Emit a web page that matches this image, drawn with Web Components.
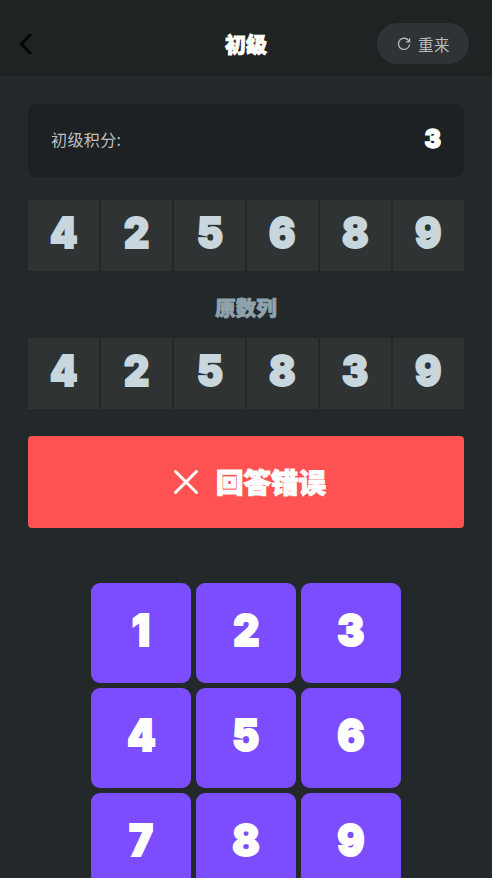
<!DOCTYPE html>
<html lang="zh">
<head>
<meta charset="utf-8">
<title>初级</title>
<style>
    html, body {
        margin: 0;
        height: 100%;
        overflow: hidden;
        background: #23282a;
        font-family: "Noto Sans CJK SC", "Liberation Sans", sans-serif;
    }
</style>
</head>
<body>
<game-header title-text="初级"></game-header>
<game-screen>
    <score-card label="初级积分:" score="3"></score-card>
    <digit-row digits="425689"></digit-row>
    <section-label>原数列</section-label>
    <digit-row digits="425839"></digit-row>
    <result-banner>回答错误</result-banner>
    <key-pad></key-pad>
</game-screen>
<script>
class GameHeader extends HTMLElement {
    constructor() {
        super()
        this.attachShadow({ mode: 'open' })
    }
    connectedCallback() {
        this.shadowRoot.innerHTML = `
            <style>
                :host {
                    display: grid;
                    grid-template-columns: 1fr auto 1fr;
                    align-items: center;
                    height: 76px;
                    box-sizing: border-box;
                    padding: 11px 23px 0 18px;
                    background: #1f2324;
                }
                svg { display: block; }
                h1 {
                    margin: 0 0 2px 5px;
                    font-size: 21px;
                    line-height: 28px;
                    font-weight: 900;
                    color: #fff;
                    -webkit-text-stroke: 0.9px #fff;
                }
                button {
                    justify-self: end;
                    display: flex;
                    align-items: center;
                    gap: 7px;
                    width: 92px;
                    height: 41px;
                    padding: 0 0 0 20px;
                    border: 0;
                    border-radius: 21px;
                    background: #2f3335;
                    color: #b9bdbd;
                    font: 400 15.5px "Noto Sans CJK SC", sans-serif;
                    letter-spacing: 0.5px;
                }
            </style>
            <svg width="16" height="24" viewBox="0 0 16 24">
                <path d="M13 2 L3.5 12 L13 22" fill="none" stroke="#050607" stroke-width="3"/>
            </svg>
            <h1>${this.getAttribute('title-text')}</h1>
            <button>
                <svg width="14" height="14" viewBox="0 0 14 14">
                    <path d="M12 4.2 A5.6 5.6 0 1 0 12.6 7.5" fill="none" stroke="#b9bdbd" stroke-width="1.3"/>
                    <path d="M12.6 1.2 V4.8 H9" fill="none" stroke="#b9bdbd" stroke-width="1.2"/>
                </svg>
                重来
            </button>
        `
    }
}
customElements.define('game-header', GameHeader)

class GameScreen extends HTMLElement {
    constructor() {
        super()
        this.attachShadow({ mode: 'open' }).innerHTML = `
            <style>
                :host {
                    display: block;
                    padding: 28px 28px 0;
                }
            </style>
            <slot></slot>
        `
    }
}
customElements.define('game-screen', GameScreen)

class ScoreCard extends HTMLElement {
    constructor() {
        super()
        this.attachShadow({ mode: 'open' })
    }
    connectedCallback() {
        this.shadowRoot.innerHTML = `
            <style>
                :host {
                    display: flex;
                    justify-content: space-between;
                    align-items: center;
                    height: 73px;
                    box-sizing: border-box;
                    padding: 0 23px 4px;
                    margin-bottom: 23px;
                    border-radius: 8px;
                    background: #1e2123;
                }
                span {
                    font-size: 16px;
                    letter-spacing: 0.4px;
                    color: #bcbfbf;
                }
                b {
                    display: inline-block;
                    transform: scaleX(.95);
                    font: 900 26px/1 Inter, "DejaVu Sans", sans-serif;
                    color: #fff;
                    -webkit-text-stroke: 1.4px #fff;
                }
            </style>
            <span>${this.getAttribute('label')}</span>
            <b>${this.getAttribute('score')}</b>
        `
    }
}
customElements.define('score-card', ScoreCard)

class DigitRow extends HTMLElement {
    constructor() {
        super()
        this.attachShadow({ mode: 'open' })
    }
    connectedCallback() {
        let cells = this.getAttribute('digits').split('').map(d => `<div><span>${d}</span></div>`).join('')
        this.shadowRoot.innerHTML = `
            <style>
                :host {
                    display: grid;
                    grid-template-columns: repeat(6, 71px);
                    gap: 2px;
                }
                div {
                    display: flex;
                    justify-content: center;
                    align-items: center;
                    height: 71px;
                    padding-bottom: 5px;
                    box-sizing: border-box;
                    background: #2f3334;
                    font: 900 42px/1 Inter, "DejaVu Sans", sans-serif;
                    color: #c8d6de;
                    -webkit-text-stroke: 2px #c8d6de;
                }
                span {
                    display: inline-block;
                    transform: scaleX(.93);
                }
            </style>
            ${cells}
        `
    }
}
customElements.define('digit-row', DigitRow)

class SectionLabel extends HTMLElement {
    constructor() {
        super()
        this.attachShadow({ mode: 'open' }).innerHTML = `
            <style>
                :host {
                    display: block;
                    height: 67px;
                    line-height: 73px;
                    text-align: center;
                    font-size: 20.5px;
                    font-weight: 900;
                    color: #8fa3ad;
                    -webkit-text-stroke: 0.8px #8fa3ad;
                }
            </style>
            <slot></slot>
        `
    }
}
customElements.define('section-label', SectionLabel)

class ResultBanner extends HTMLElement {
    constructor() {
        super()
        this.attachShadow({ mode: 'open' }).innerHTML = `
            <style>
                :host {
                    display: flex;
                    justify-content: center;
                    align-items: center;
                    gap: 18px;
                    height: 92px;
                    box-sizing: border-box;
                    padding-left: 8px;
                    margin-top: 27px;
                    border-radius: 4px;
                    background: #ff5252;
                    font-size: 27.5px;
                    font-weight: 900;
                    color: #fff;
                    -webkit-text-stroke: 1.1px #fff;
                }
                svg { display: block; }
                span { margin-bottom: 2px; }
            </style>
            <svg width="24" height="24" viewBox="0 0 24 24">
                <path d="M1.5 1.5 L22.5 22.5 M22.5 1.5 L1.5 22.5" stroke="#fff" stroke-width="3" stroke-linecap="round"/>
            </svg>
            <span><slot></slot></span>
        `
    }
}
customElements.define('result-banner', ResultBanner)

class KeyPad extends HTMLElement {
    constructor() {
        super()
        this.attachShadow({ mode: 'open' })
    }
    connectedCallback() {
        let keys = [1, 2, 3, 4, 5, 6, 7, 8, 9].map(n => `<button><span>${n}</span></button>`).join('')
        this.shadowRoot.innerHTML = `
            <style>
                :host {
                    display: grid;
                    grid-template-columns: repeat(3, 100px);
                    grid-auto-rows: 100px;
                    gap: 5px;
                    justify-content: center;
                    margin-top: 55px;
                }
                button {
                    display: flex;
                    justify-content: center;
                    align-items: center;
                    padding: 0 0 6px;
                    border: 0;
                    border-radius: 9px;
                    background: #7c4dff;
                    font: 900 44px/1 Inter, "DejaVu Sans", sans-serif;
                    color: #fff;
                    -webkit-text-stroke: 2px #fff;
                }
                span {
                    display: inline-block;
                    transform: scaleX(.92);
                }
            </style>
            ${keys}
        `
    }
}
customElements.define('key-pad', KeyPad)
</script>
</body>
</html>
